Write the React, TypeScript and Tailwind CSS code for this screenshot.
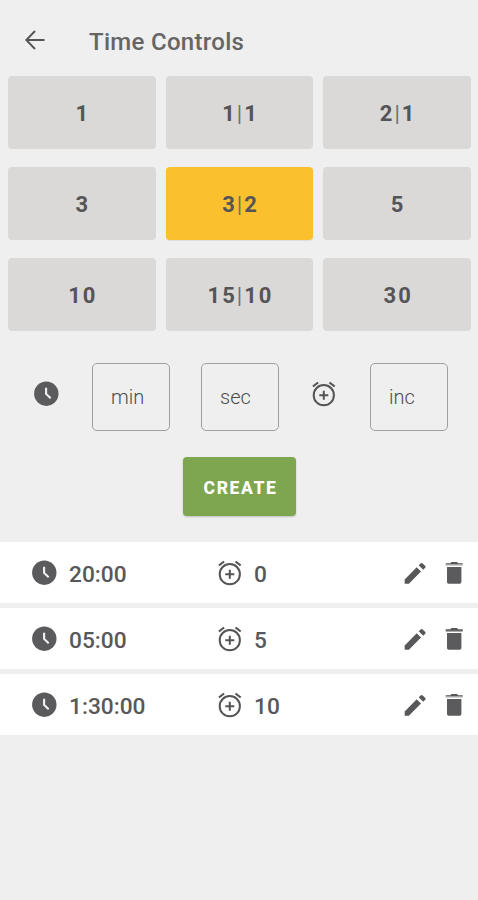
import React from "react";

const presets = ["1", "1|1", "2|1", "3", "3|2", "5", "10", "15|10", "30"];

const saved = [
  { time: "20:00", inc: "0", softLid: true },
  { time: "05:00", inc: "5", softLid: false },
  { time: "1:30:00", inc: "10", softLid: true },
];

function Clock({ className = "" }: { className?: string }) {
  return (
    <svg width="25" height="25" viewBox="0 0 25 25" className={`shrink-0 ${className}`}>
      <circle cx="12.3" cy="12.7" r="12.2" fill="#5b5b5d" />
      <path d="M12.1 6.8V12.9L16.7 17.2" fill="none" stroke="#f2f2f2" strokeWidth="2.1" />
    </svg>
  );
}

function Alarm({ className = "" }: { className?: string }) {
  return (
    <svg
      width="24"
      height="25"
      viewBox="0 -0.5 24 25"
      fill="none"
      stroke="#545456"
      strokeWidth="2"
      className={`shrink-0 overflow-visible ${className}`}
    >
      <circle cx="11.8" cy="13.7" r="10.1" />
      <path d="M0.9 5L6.1 1M22.7 5L17.5 1" strokeWidth="2.2" />
      <path d="M11.8 9.2V18.2M7.3 13.7H16.3" />
    </svg>
  );
}

function Pencil() {
  return (
    <svg width="23" height="25" viewBox="0 -2 23 25" fill="#58585a" className="shrink-0">
      <path d="M0.7 17.6L12.7 5.3L17 9.6L4.9 21.8H0.7Z" />
      <path d="M14.7 3.3L16.6 1.4Q17.6 0.5 18.7 1.4L21.3 3.9Q22.2 4.9 21.2 5.8L19.2 7.7Z" />
    </svg>
  );
}

function Trash({ softLid }: { softLid: boolean }) {
  return (
    <svg width="19" height="25" viewBox="0 -1 19 25" className="ml-[18px] shrink-0">
      <path d="M5.3 2.2L6.4 1H12L13.1 2.2H17.7V3.4H0.7V2.2Z" fill="#58585a" />
      <path d="M0.7 3.2H17.7V4.5H0.7Z" fill={softLid ? "#a3a3a3" : "#58585a"} />
      <path d="M2 6H16.4V21Q16.4 22.7 14.7 22.7H3.7Q2 22.7 2 21Z" fill="#5b5b5d" />
    </svg>
  );
}

function Preset({ label, active }: { label: string; active: boolean }) {
  const [base, inc] = label.split("|");
  return (
    <button
      className={`flex h-[73px] items-center justify-center rounded-[4px] pt-[1px] pl-[2px] text-[22px] font-bold tracking-[2px] text-[#555557] ${
        active ? "bg-[#fbc02d] shadow-[0_1px_1px_rgba(0,0,0,0.08)]" : "bg-[#dad9d8]"
      }`}
    >
      {base}
      {inc && <span className="font-normal text-[#707070]">|</span>}
      {inc}
    </button>
  );
}

function Field({ label, className }: { label: string; className: string }) {
  return (
    <div
      className={`flex h-[68px] w-[78px] shrink-0 items-center rounded-[5px] border border-[#a0a0a0] pl-[18px] text-[20px] font-light text-[#4c4c4c] ${className}`}
    >
      {label}
    </div>
  );
}

export default function App() {
  return (
    <div className="flex h-[900px] w-[478px] flex-col overflow-hidden bg-[#efefef] font-['Roboto',sans-serif] text-[#58585a]">
      <header className="flex h-[76px] items-center pt-[7px] pl-[25px]">
        <svg width="20" height="20" viewBox="0 0 20 20" fill="none" stroke="#555" strokeWidth="1.9" className="-mt-[3px]">
          <path d="M19.5 10H1.5M10 1L1.3 10L10 19" />
        </svg>
        <h1 className="ml-[44px] text-[24px] font-medium leading-[30px] tracking-[0.3px] text-[#656565]">Time Controls</h1>
      </header>

      <div className="grid grid-cols-3 gap-x-[10px] gap-y-[18px] pr-[7px] pl-[8px]">
        {presets.map((p) => (
          <Preset key={p} label={p} active={p === "3|2"} />
        ))}
      </div>

      <div className="mt-[32px] flex items-center pl-[33.5px]">
        <Clock className="-mt-[7px]" />
        <Field label="min" className="ml-[33.5px]" />
        <Field label="sec" className="ml-[31px]" />
        <Alarm className="ml-[33px] -mt-[7px]" />
        <Field label="inc" className="ml-[34px]" />
      </div>

      <button className="mt-[26px] ml-[183px] h-[59px] w-[113px] rounded-[4px] bg-[#7ea650] pt-[3px] pl-[2px] text-[17.5px] font-extrabold tracking-[1.6px] text-white shadow-[0_1px_2px_rgba(0,0,0,0.2)]">
        CREATE
      </button>

      <ul className="mt-[26px] flex flex-col gap-[5px]">
        {saved.map((s) => (
          <li key={s.time} className="flex h-[61px] items-center bg-white pl-[32px]">
            <div className="flex w-[186px] items-center">
              <Clock />
              <span className="ml-[12px] pt-[4px] text-[22.7px] font-medium leading-[30px]">{s.time}</span>
            </div>
            <div className="flex w-[186px] items-center">
              <Alarm />
              <span className="ml-[12px] pt-[4px] text-[22.7px] font-medium leading-[30px]">{s.inc}</span>
            </div>
            <Pencil />
            <Trash softLid={s.softLid} />
          </li>
        ))}
      </ul>
    </div>
  );
}
